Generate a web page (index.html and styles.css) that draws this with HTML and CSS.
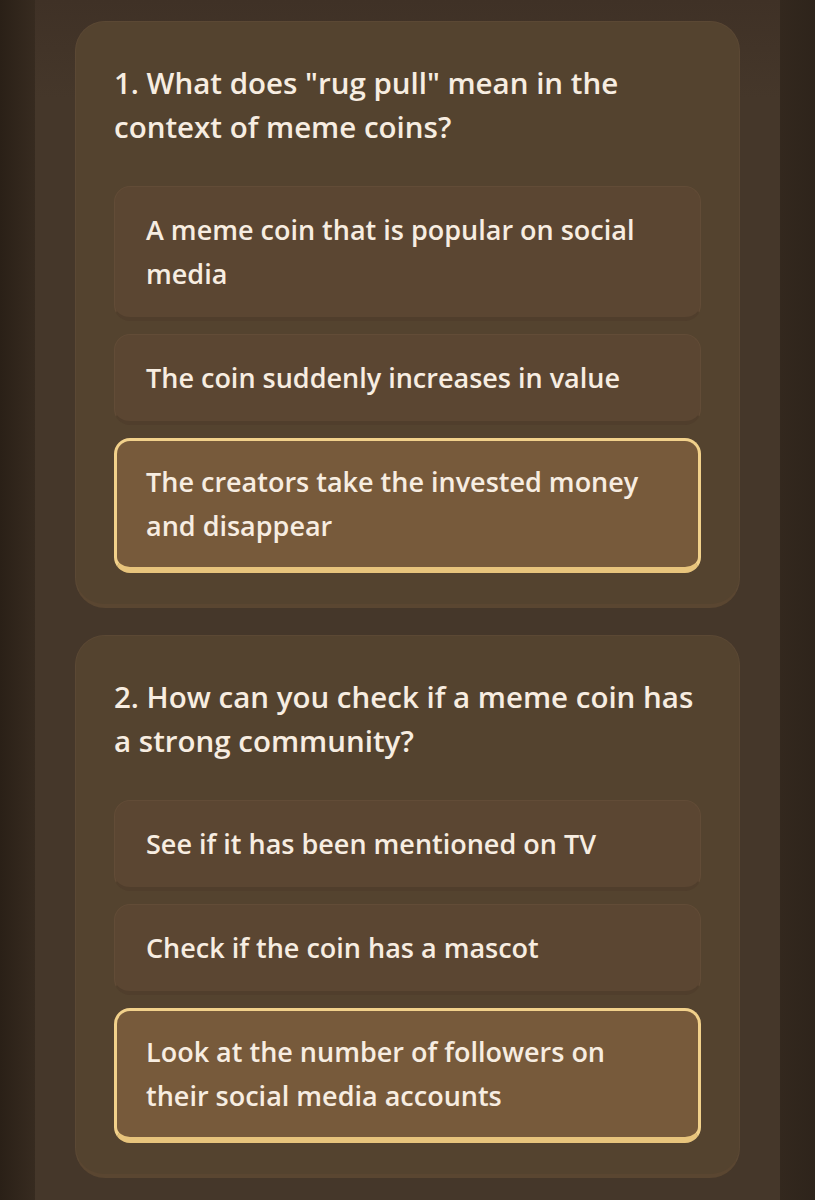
FILE: index.html
```html
<!DOCTYPE html>
<html lang="en">
<head>
<meta charset="utf-8">
<title>Meme Coin Quiz</title>
<link rel="stylesheet" href="styles.css">
</head>
<body>
<main class="column">
  <section class="card">
    <h2 class="question">1. What does "rug pull" mean in the context of meme coins?</h2>
    <div class="options">
      <div class="option">A meme coin that is popular on social media</div>
      <div class="option">The coin suddenly increases in value</div>
      <div class="option selected">The creators take the invested money and disappear</div>
    </div>
  </section>
  <section class="card">
    <h2 class="question">2. How can you check if a meme coin has a strong community?</h2>
    <div class="options">
      <div class="option">See if it has been mentioned on TV</div>
      <div class="option">Check if the coin has a mascot</div>
      <div class="option selected">Look at the number of followers on their social media accounts</div>
    </div>
  </section>
</main>
</body>
</html>
```
FILE: styles.css
```css
html, body {
  margin: 0;
  height: 100%;
}

body {
  background: linear-gradient(90deg, #2a2017 0%, #372b20 4.3%, #45372a 4.3%, #45372a 95.7%, #33281e 95.7%, #2e241b 100%);
  font-family: "Open Sans", "Noto Sans", sans-serif;
  color: #f7ede1;
  padding: 0 35px;
  box-sizing: border-box;
  overflow: hidden;
}

.column {
  box-sizing: border-box;
  background: linear-gradient(180deg, #3f3126 0%, #45372a 8%, #45372a 100%);
  min-height: 100%;
  padding: 21px 40px 40px;
  display: flex;
  flex-direction: column;
  gap: 27px;
}

.card {
  background: #54432f;
  border: 1px solid #5b4834;
  border-bottom: 4px solid #5a4631;
  border-radius: 30px;
  padding: 39px 38px 31px;
}

.question {
  margin: 0 0 37px 0;
  font-size: 29.5px;
  line-height: 44px;
  font-weight: 600;
}

.options {
  display: flex;
  flex-direction: column;
  gap: 13px;
}

.option {
  background: #5b4632;
  border: 1px solid #624c37;
  border-bottom: 4px solid #503e2c;
  border-radius: 16px;
  padding: 21px 30px 21px 31px;
  font-size: 27px;
  line-height: 44px;
  font-weight: 600;
}

.option.selected {
  background: #775a3b;
  border: 3px solid #f2d18b;
  border-bottom: 6px solid #e8c47c;
  padding: 19px 28px 19px 29px;
}
```
